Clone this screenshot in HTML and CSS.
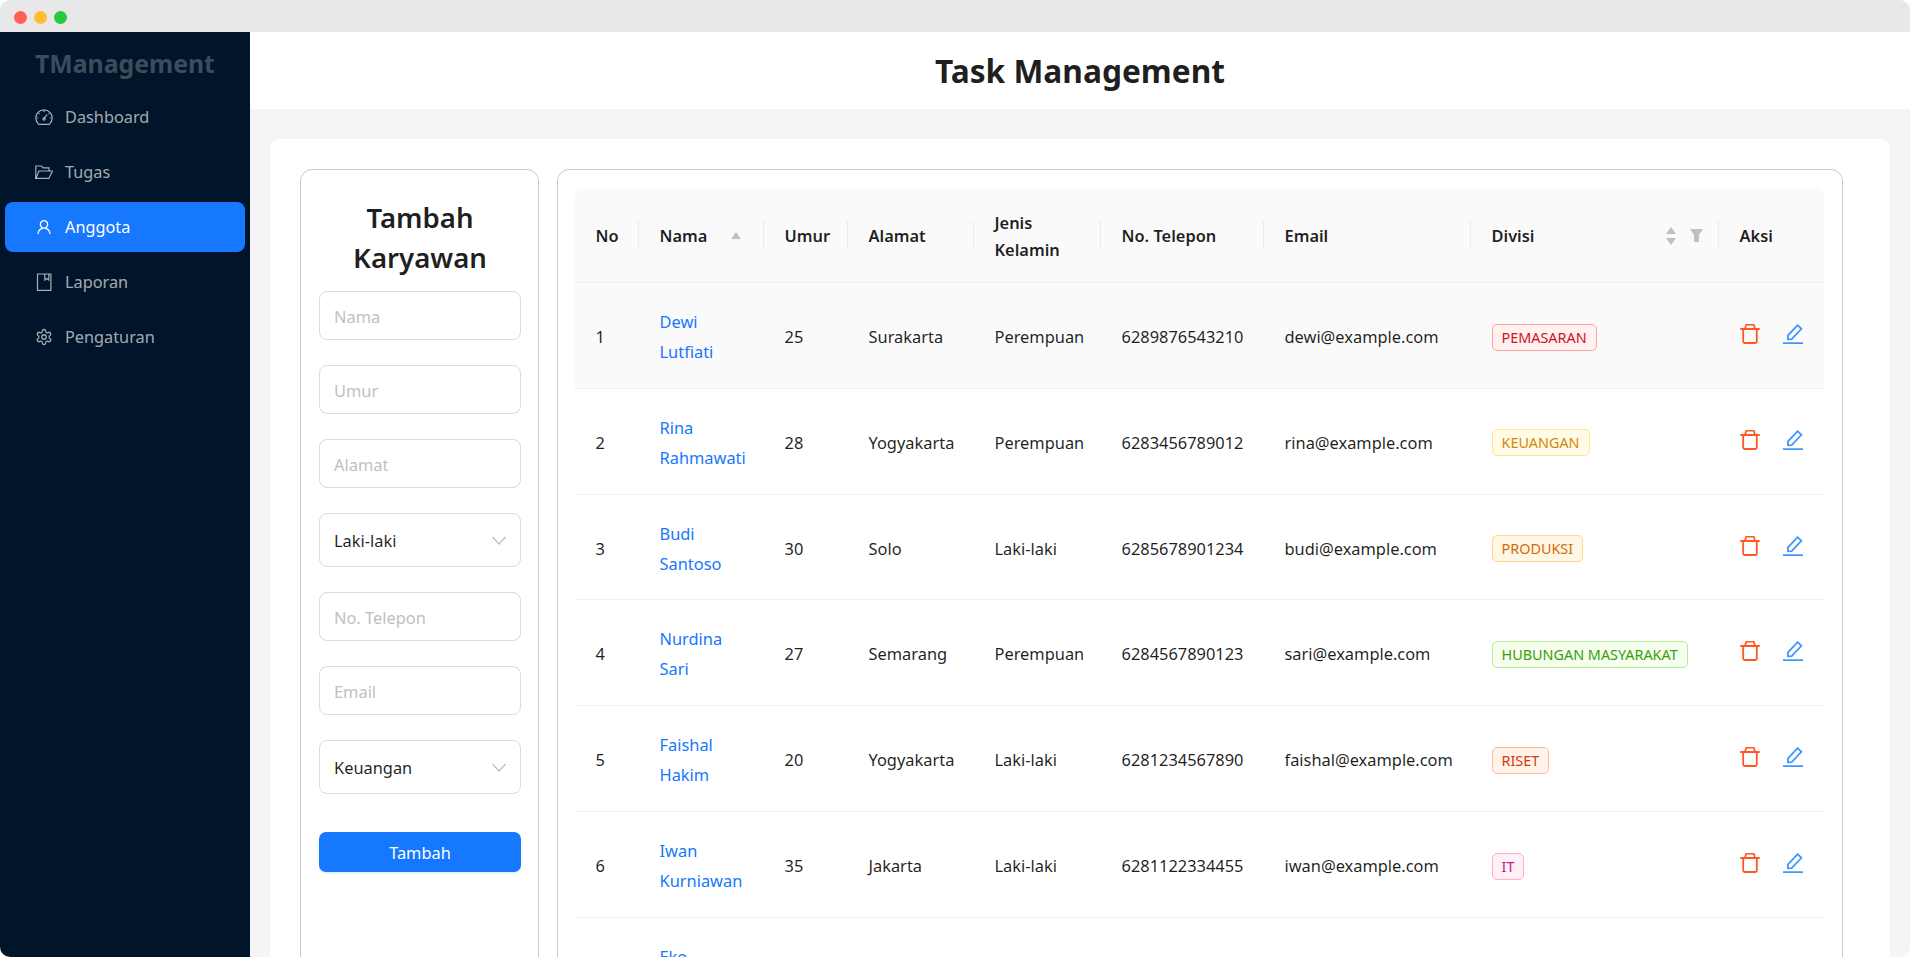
FILE: index.html
```html
<!DOCTYPE html>
<html lang="id">
<head>
<meta charset="utf-8">
<title>Task Management</title>
<link rel="stylesheet" href="styles.css">
</head>
<body>
<div class="window">
  <div class="titlebar">
    <span class="dot dot-red"></span><span class="dot dot-yellow"></span><span class="dot dot-green"></span>
  </div>
  <div class="app">
    <aside class="sidebar">
      <div class="logo">TManagement</div>
      <nav class="menu">
        <a class="menu-item">
          <svg class="menu-icon" viewBox="0 0 18 18"><path d="M3.8 16.4h10.4a8.2 8.2 0 1 0-10.4 0z"/><path d="M9 10.4l3.2-3.8M9 2.6v1.4M3.6 5l1 .9M1.8 10h1.4M14.8 10h1.4M14.4 5l-.9.9"/><circle cx="9" cy="11" r="1.1"/></svg>
          <span>Dashboard</span>
        </a>
        <a class="menu-item">
          <svg class="menu-icon" viewBox="0 0 18 18"><path d="M.8 15.4V3h5.7l1.6 1.8H14V8"/><path d="M.8 15.4h13L17.4 8H4l-3.2 7.4z"/></svg>
          <span>Tugas</span>
        </a>
        <a class="menu-item active">
          <svg class="menu-icon" viewBox="0 0 1024 1024"><path class="solid" d="M858.5 763.6a374 374 0 0 0-80.6-119.5 375.63 375.63 0 0 0-119.5-80.6c-.4-.2-.8-.3-1.2-.5C719.5 518 760 444.7 760 362c0-137-111-248-248-248S264 225 264 362c0 82.7 40.5 156 102.8 201.1-.4.2-.8.3-1.2.5-44.8 18.9-85 46-119.5 80.6a375.63 375.63 0 0 0-80.6 119.5A371.7 371.7 0 0 0 136 901.8a8 8 0 0 0 8 8.2h60c4.4 0 7.9-3.5 8-7.8 2-77.2 33-149.5 87.8-204.3 56.7-56.7 132-87.9 212.2-87.9s155.5 31.2 212.2 87.9C779 752.7 810 825 812 902.2c.1 4.4 3.6 7.8 8 7.8h60a8 8 0 0 0 8-8.2c-1-47.8-10.9-94.3-29.5-138.2zM512 534c-45.9 0-89.1-17.9-121.6-50.4S340 407.9 340 362c0-45.9 17.9-89.1 50.4-121.6S466.1 190 512 190s89.1 17.9 121.6 50.4S684 316.1 684 362c0 45.9-17.9 89.1-50.4 121.6S557.9 534 512 534z"/></svg>
          <span>Anggota</span>
        </a>
        <a class="menu-item">
          <svg class="menu-icon" viewBox="0 0 18 18"><path d="M2.5 1h13.4v16.4H2.5z"/><path d="M9.8 1v6l2-1.5 2 1.5V1"/></svg>
          <span>Laporan</span>
        </a>
        <a class="menu-item">
          <svg class="menu-icon" viewBox="0 0 24 24"><path d="M12.22 2h-.44a2 2 0 0 0-2 2v.18a2 2 0 0 1-1 1.73l-.43.25a2 2 0 0 1-2 0l-.15-.08a2 2 0 0 0-2.73.73l-.22.38a2 2 0 0 0 .73 2.73l.15.1a2 2 0 0 1 1 1.72v.51a2 2 0 0 1-1 1.74l-.15.09a2 2 0 0 0-.73 2.73l.22.38a2 2 0 0 0 2.73.73l.15-.08a2 2 0 0 1 2 0l.43.25a2 2 0 0 1 1 1.73V20a2 2 0 0 0 2 2h.44a2 2 0 0 0 2-2v-.18a2 2 0 0 1 1-1.73l.43-.25a2 2 0 0 1 2 0l.15.08a2 2 0 0 0 2.73-.73l.22-.39a2 2 0 0 0-.73-2.73l-.15-.08a2 2 0 0 1-1-1.74v-.5a2 2 0 0 1 1-1.74l.15-.09a2 2 0 0 0 .73-2.73l-.22-.38a2 2 0 0 0-2.73-.73l-.15.08a2 2 0 0 1-2 0l-.43-.25a2 2 0 0 1-1-1.73V4a2 2 0 0 0-2-2z"/><circle cx="12" cy="12" r="3"/></svg>
          <span>Pengaturan</span>
        </a>
      </nav>
    </aside>
    <main class="main">
      <header class="header"><h1>Task Management</h1></header>
      <div class="content">
        <div class="card">
          <section class="panel form-panel">
            <h2>Tambah Karyawan</h2>
            <div class="form">
              <div class="field"><span class="placeholder">Nama</span></div>
              <div class="field"><span class="placeholder">Umur</span></div>
              <div class="field"><span class="placeholder">Alamat</span></div>
              <div class="field select"><span>Laki-laki</span><svg class="chev" viewBox="0 0 14 9"><path d="M.5 1l6.5 7 6.5-7"/></svg></div>
              <div class="field"><span class="placeholder">No. Telepon</span></div>
              <div class="field"><span class="placeholder">Email</span></div>
              <div class="field select"><span>Keuangan</span><svg class="chev" viewBox="0 0 14 9"><path d="M.5 1l6.5 7 6.5-7"/></svg></div>
              <button class="submit" type="button">Tambah</button>
            </div>
          </section>
          <section class="panel table-panel">
            <table class="grid">
              <thead>
                <tr>
                  <th>No</th>
                  <th><div class="th-flex"><span>Nama</span><span class="caret-up solo"></span></div></th>
                  <th>Umur</th>
                  <th>Alamat</th>
                  <th>Jenis Kelamin</th>
                  <th>No. Telepon</th>
                  <th>Email</th>
                  <th><div class="th-flex"><span>Divisi</span><span class="th-tools"><span class="sorter"><span class="caret-up"></span><span class="caret-down"></span></span><svg class="funnel" viewBox="0 0 13 13"><path d="M0 0h13L9 6v7H4V6z"/></svg></span></div></th>
                  <th>Aksi</th>
                </tr>
              </thead>
              <tbody>
                <tr class="hover">
                  <td>1</td><td><a class="name">Dewi Lutfiati</a></td><td>25</td><td>Surakarta</td><td>Perempuan</td><td>6289876543210</td><td>dewi@example.com</td>
                  <td><span class="tag tag-red">PEMASARAN</span></td>
                  <td><div class="actions"><svg class="trash" viewBox="0 0 20 20"><path d="M.3 5h19.4M5 5l.9-3.6q.2-.7 1-.7h6.2q.8 0 1 .7L15 5M3.2 5v12.5q0 1.5 1.5 1.5h10.6q1.5 0 1.5-1.5V5"/></svg><svg class="pen" viewBox="0 0 20 20"><path d="M0 19.2h20M5 15.3l-.2-3.7L14.6 1.2l3.8 3.7-9.7 10.3z"/></svg></div></td>
                </tr>
                <tr>
                  <td>2</td><td><a class="name">Rina Rahmawati</a></td><td>28</td><td>Yogyakarta</td><td>Perempuan</td><td>6283456789012</td><td>rina@example.com</td>
                  <td><span class="tag tag-gold">KEUANGAN</span></td>
                  <td><div class="actions"><svg class="trash" viewBox="0 0 20 20"><path d="M.3 5h19.4M5 5l.9-3.6q.2-.7 1-.7h6.2q.8 0 1 .7L15 5M3.2 5v12.5q0 1.5 1.5 1.5h10.6q1.5 0 1.5-1.5V5"/></svg><svg class="pen" viewBox="0 0 20 20"><path d="M0 19.2h20M5 15.3l-.2-3.7L14.6 1.2l3.8 3.7-9.7 10.3z"/></svg></div></td>
                </tr>
                <tr>
                  <td>3</td><td><a class="name">Budi Santoso</a></td><td>30</td><td>Solo</td><td>Laki-laki</td><td>6285678901234</td><td>budi@example.com</td>
                  <td><span class="tag tag-orange">PRODUKSI</span></td>
                  <td><div class="actions"><svg class="trash" viewBox="0 0 20 20"><path d="M.3 5h19.4M5 5l.9-3.6q.2-.7 1-.7h6.2q.8 0 1 .7L15 5M3.2 5v12.5q0 1.5 1.5 1.5h10.6q1.5 0 1.5-1.5V5"/></svg><svg class="pen" viewBox="0 0 20 20"><path d="M0 19.2h20M5 15.3l-.2-3.7L14.6 1.2l3.8 3.7-9.7 10.3z"/></svg></div></td>
                </tr>
                <tr>
                  <td>4</td><td><a class="name">Nurdina Sari</a></td><td>27</td><td>Semarang</td><td>Perempuan</td><td>6284567890123</td><td>sari@example.com</td>
                  <td><span class="tag tag-green">HUBUNGAN MASYARAKAT</span></td>
                  <td><div class="actions"><svg class="trash" viewBox="0 0 20 20"><path d="M.3 5h19.4M5 5l.9-3.6q.2-.7 1-.7h6.2q.8 0 1 .7L15 5M3.2 5v12.5q0 1.5 1.5 1.5h10.6q1.5 0 1.5-1.5V5"/></svg><svg class="pen" viewBox="0 0 20 20"><path d="M0 19.2h20M5 15.3l-.2-3.7L14.6 1.2l3.8 3.7-9.7 10.3z"/></svg></div></td>
                </tr>
                <tr>
                  <td>5</td><td><a class="name">Faishal Hakim</a></td><td>20</td><td>Yogyakarta</td><td>Laki-laki</td><td>6281234567890</td><td>faishal@example.com</td>
                  <td><span class="tag tag-volcano">RISET</span></td>
                  <td><div class="actions"><svg class="trash" viewBox="0 0 20 20"><path d="M.3 5h19.4M5 5l.9-3.6q.2-.7 1-.7h6.2q.8 0 1 .7L15 5M3.2 5v12.5q0 1.5 1.5 1.5h10.6q1.5 0 1.5-1.5V5"/></svg><svg class="pen" viewBox="0 0 20 20"><path d="M0 19.2h20M5 15.3l-.2-3.7L14.6 1.2l3.8 3.7-9.7 10.3z"/></svg></div></td>
                </tr>
                <tr>
                  <td>6</td><td><a class="name">Iwan Kurniawan</a></td><td>35</td><td>Jakarta</td><td>Laki-laki</td><td>6281122334455</td><td>iwan@example.com</td>
                  <td><span class="tag tag-magenta">IT</span></td>
                  <td><div class="actions"><svg class="trash" viewBox="0 0 20 20"><path d="M.3 5h19.4M5 5l.9-3.6q.2-.7 1-.7h6.2q.8 0 1 .7L15 5M3.2 5v12.5q0 1.5 1.5 1.5h10.6q1.5 0 1.5-1.5V5"/></svg><svg class="pen" viewBox="0 0 20 20"><path d="M0 19.2h20M5 15.3l-.2-3.7L14.6 1.2l3.8 3.7-9.7 10.3z"/></svg></div></td>
                </tr>
                <tr>
                  <td></td><td><a class="name">Eko</a></td><td></td><td></td><td></td><td></td><td></td><td></td><td></td>
                </tr>
              </tbody>
            </table>
          </section>
        </div>
      </div>
    </main>
  </div>
</div>
</body>
</html>
```
FILE: styles.css
```css
* { box-sizing: border-box; }
html, body { margin: 0; height: 100%; overflow: hidden; background: #fff; }
body { font-family: "Noto Sans", "Open Sans", sans-serif; font-size: 16px; color: rgba(0,0,0,.88); }

.window { height: 957px; display: flex; flex-direction: column; border-radius: 10px; overflow: hidden; }
.titlebar { height: 32px; flex: none; background: #e8e8e8; display: flex; align-items: center; gap: 7px; padding: 2px 0 0 14px; }
.dot { width: 13px; height: 13px; border-radius: 50%; }
.dot-red { background: #ff5f57; }
.dot-yellow { background: #febc2e; }
.dot-green { background: #28c840; }

.app { flex: 1; display: flex; min-height: 0; }
.sidebar { width: 250px; flex: none; background: #001529; padding: 15px 5px 0; }
.logo { padding-left: 30px; font-size: 24.8px; line-height: 32px; font-weight: 700; color: #3e4b5b; margin-bottom: 13px; white-space: nowrap; }
.menu { display: flex; flex-direction: column; gap: 5px; }
.menu-item { height: 50px; display: flex; align-items: center; gap: 12px; padding-left: 30px; border-radius: 8px; color: rgba(255,255,255,.65); font-size: 16.3px; }
.menu-item.active { background: #1677ff; color: #fff; }
.menu-icon { width: 18px; height: 18px; flex: none; fill: none; stroke: currentColor; stroke-width: 1.2; }
.menu-item:nth-child(5) .menu-icon { stroke-width: 1.7; }
.menu-icon .solid { fill: currentColor; stroke: none; }

.main { flex: 1; min-width: 0; display: flex; flex-direction: column; background: #f5f5f5; }
.header { height: 77px; flex: none; background: #fff; display: flex; align-items: center; justify-content: center; }
.header h1 { margin: 0; font-size: 31.7px; font-weight: 700; line-height: 40px; color: rgba(0,0,0,.88); }
.content { flex: 1; padding: 30px 20px 0; min-height: 0; }
.card { background: #fff; border-radius: 10px; padding: 30px 47px 0 30px; display: flex; gap: 18px; height: 1300px; }
.panel { border: 1px solid #c8c8c8; border-radius: 12px; background: #fff; }
.form-panel { width: 239px; flex: none; padding: 27px 17px 0 18px; }
.form-panel h2 { margin: 0 0 14px; font-size: 27.6px; line-height: 40px; font-weight: 600; text-align: center; }
.form { display: flex; flex-direction: column; gap: 25px; }
.field { height: 49px; border: 1.5px solid #dcdcdc; border-radius: 8px; display: flex; align-items: center; padding: 2px 14px 0; font-size: 16.4px; background: #fff; }
.field.select { height: 54px; justify-content: space-between; padding: 0 14px; }
.placeholder { color: #bfbfbf; }
.chev { width: 14px; height: 9px; fill: none; stroke: #bdbdbd; stroke-width: 1.2; }
.submit { height: 40px; margin-top: 13px; border: 0; border-radius: 7px; background: #1677ff; color: #fff; font: inherit; font-size: 16.4px; box-shadow: 0 2px 0 rgba(5,145,255,.1); }

.table-panel { flex: 1; min-width: 0; padding: 18px 18px 0 17px; }
.grid { width: 1249px; border-collapse: separate; border-spacing: 0; table-layout: fixed; }
.grid th:nth-child(1) { width: 64px; }
.grid th:nth-child(2) { width: 125px; }
.grid th:nth-child(3) { width: 84px; }
.grid th:nth-child(4) { width: 126px; }
.grid th:nth-child(5) { width: 127px; }
.grid th:nth-child(6) { width: 163px; }
.grid th:nth-child(7) { width: 207px; }
.grid th:nth-child(8) { width: 248px; }
.grid th:nth-child(9) { width: 105px; }
.grid th { position: relative; height: 95px; padding: 1px 20.5px 0; background: #fafafa; border-bottom: 1px solid #f0f0f0; text-align: left; font-weight: 600; font-size: 16.4px; line-height: 27px; color: rgba(0,0,0,.88); }
.grid th:first-child { border-top-left-radius: 8px; }
.grid th:last-child { border-top-right-radius: 8px; }
.grid th:not(:last-child)::after { content: ""; position: absolute; right: 0; top: 50%; width: 1px; height: 28px; margin-top: -14px; background: rgba(0,0,0,.06); }
.grid td { padding: 24px 20.5px 20.8px; border-bottom: 1px solid #f0f0f0; font-size: 16.4px; line-height: 30px; vertical-align: middle; }
.grid tr.hover td { background: #fafafa; }
.name { color: #1677ff; display: block; }
.th-flex { display: flex; align-items: center; justify-content: space-between; margin-right: 3px; }
.grid th:nth-child(8) .th-flex { margin-right: -4px; }
.th-tools { display: flex; align-items: center; gap: 14px; }
.sorter { display: flex; flex-direction: column; gap: 4px; }
.caret-up { display: block; width: 0; height: 0; border-left: 5.5px solid transparent; border-right: 5.5px solid transparent; border-bottom: 7px solid #bfbfbf; }
.caret-down { display: block; width: 0; height: 0; border-left: 5.5px solid transparent; border-right: 5.5px solid transparent; border-top: 7px solid #bfbfbf; }
.funnel { width: 13px; height: 13px; fill: #bfbfbf; }

.tag { display: inline-block; height: 27px; line-height: 25px; padding: 0 9px; margin-bottom: 2px; border: 1px solid; border-radius: 5px; font-size: 14.4px; white-space: nowrap; vertical-align: middle; }
.tag-red { color: #cf1322; background: #fff1f0; border-color: #ffa39e; }
.tag-gold { color: #d48806; background: #fffbe6; border-color: #ffe58f; }
.tag-orange { color: #d46b08; background: #fff7e6; border-color: #ffd591; }
.tag-green { color: #389e0d; background: #f6ffed; border-color: #b7eb8f; }
.tag-volcano { color: #d4380d; background: #fff2e8; border-color: #ffbb96; }
.tag-magenta { color: #c41d7f; background: #fff0f6; border-color: #ffadd2; }

.actions { display: flex; gap: 23px; padding-bottom: 6px; }
.trash, .pen { width: 20px; height: 20px; flex: none; fill: none; stroke-width: 1.8; }
.trash { stroke: #ff5722; }
.pen { stroke: #4096ff; }
```
